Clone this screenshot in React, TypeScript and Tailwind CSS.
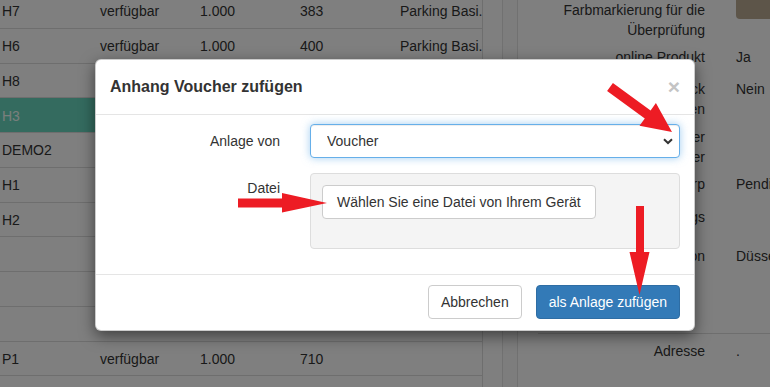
import React from 'react';

type Row = { id: string; status: string; qty: string; num: string; name: string; active?: boolean };

const rows: Row[] = [
  { id: 'H7', status: 'verfügbar', qty: '1.000', num: '383', name: 'Parking Basi.' },
  { id: 'H6', status: 'verfügbar', qty: '1.000', num: '400', name: 'Parking Basi.' },
  { id: 'H8', status: 'verfügbar', qty: '1.000', num: '412', name: 'Parking Basi.' },
  { id: 'H3', status: 'verfügbar', qty: '1.000', num: '377', name: 'Parking Basi.', active: true },
  { id: 'DEMO2', status: 'verfügbar', qty: '1.000', num: '12', name: 'Parking Basi.' },
  { id: 'H1', status: 'verfügbar', qty: '1.000', num: '350', name: 'Parking Basi.' },
  { id: 'H2', status: 'verfügbar', qty: '1.000', num: '351', name: 'Parking Basi.' },
  { id: '', status: '', qty: '', num: '', name: '' },
  { id: '', status: '', qty: '', num: '', name: '' },
  { id: '', status: '', qty: '', num: '', name: '' },
  { id: 'P1', status: 'verfügbar', qty: '1.000', num: '710', name: '' },
  { id: '', status: '', qty: '', num: '', name: '' },
];

function ProductTable() {
  return (
    <div className="w-[483px] shrink-0 border-r border-[#ddd] flex flex-col mt-[-6px]">
      {rows.map((r, i) => (
        <div
          key={i}
          className={`h-[34.75px] shrink-0 border-b border-[#ddd] flex items-center pt-[2px] whitespace-nowrap ${
            r.active ? 'bg-[#68d6be] text-[#f2fffb]' : ''
          }`}
        >
          <div className="w-[100px] pl-[2px]">{r.id}</div>
          <div className="w-[100px]">{r.status}</div>
          <div className="w-[100px]">{r.qty}</div>
          <div className="w-[100px]">{r.num}</div>
          <div className="flex-1 overflow-hidden">{r.name}</div>
        </div>
      ))}
    </div>
  );
}

function DetailRow({ label, value, className }: { label: React.ReactNode; value?: React.ReactNode; className?: string }) {
  return (
    <div className={`flex leading-[20px] ${className ?? ''}`}>
      <div className="w-[167px] shrink-0 text-right">{label}</div>
      <div className="ml-[31px] whitespace-nowrap">{value}</div>
    </div>
  );
}

function DetailPanel() {
  return (
    <div className="w-[300px] shrink-0 pl-[20px] flex flex-col">
      <DetailRow
        label={
          <>
            Farbmarkierung für die
            <br />
            Überprüfung
          </>
        }
        value={<div className="w-[40px] h-[29px] mt-[-10px] rounded-[4px] bg-[#baaa92]" />}
      />
      <DetailRow className="mt-[7px]" label="online Produkt" value="Ja" />
      <DetailRow
        className="mt-[12px]"
        label={
          <>
            Zahlung per Check
            <br />
            zulassen
          </>
        }
        value="Nein"
      />
      <DetailRow
        className="mt-[8px]"
        label={
          <>
            Kategorie der
            <br />
            Anbieter
          </>
        }
      />
      <DetailRow className="mt-[7px]" label="Status Corp" value="Pending" />
      <DetailRow className="mt-[13px]" label="Feiertags" />
      <DetailRow className="mt-[19px]" label="Standort Region" value="Düsseldorf" />
      <div className="mt-[67px] border-t border-[#ddd]" />
      <DetailRow className="mt-[7px]" label="Adresse" value="." />
    </div>
  );
}

function Arrows() {
  return (
    <svg className="absolute inset-0 pointer-events-none" width="770" height="387" viewBox="0 0 770 387">
      <polygon
        fill="#ed1c24"
        points="607.1,91 612.9,83 650.6,110.4 655.9,103.1 672,132 639.5,125.7 644.8,118.4"
      />
      <polygon fill="#ed1c24" points="238,198.5 282,198.5 282,193 327,203 282,212.5 282,207.5 238,207.5" />
      <polygon fill="#ed1c24" points="636,206 644,206 644,252 649.5,252 639.5,295 629.5,252 636,252" />
    </svg>
  );
}

function VoucherModal() {
  return (
    <div className="absolute left-[95px] top-[59px] w-[600px] rounded-[6px] bg-white border border-black/20 shadow-[0_5px_15px_rgba(0,0,0,0.5)]">
      <div className="h-[55px] px-[14px] border-b border-[#e5e5e5] flex items-center justify-between">
        <h4 className="text-[16px] font-bold text-[#333]">Anhang Voucher zufügen</h4>
        <button className="text-[21px] font-bold leading-none text-[#c4c4c4] mt-[-2px]">×</button>
      </div>

      <div className="px-[14px] pt-[9px] pb-[25px]">
        <div className="flex">
          <label className="w-[170px] shrink-0 text-right leading-[20px] pt-[7px]">Anlage von</label>
          <div className="ml-[30px] flex-1 relative">
            <select
              className="w-full h-[34px] appearance-none pl-[16px] rounded-[4px] border border-[#66afe9] bg-white text-[14px] text-[#333] outline-none shadow-[inset_0_1px_1px_rgba(0,0,0,0.075),0_0_8px_rgba(102,175,233,0.6)]"
              defaultValue="voucher"
            >
              <option value="voucher">Voucher</option>
            </select>
            <svg
              className="absolute right-[7px] top-[14px] pointer-events-none"
              width="10"
              height="7"
              viewBox="0 0 10 7"
              fill="none"
              stroke="#333"
              strokeWidth="2"
            >
              <path d="M1 1.2 L5 5 L9 1.2" />
            </svg>
          </div>
        </div>

        <div className="flex mt-[15px]">
          <label className="w-[170px] shrink-0 text-right leading-[20px] pt-[5px]">Datei</label>
          <div className="ml-[30px] flex-1 h-[76px] rounded-[4px] border border-[#ddd] bg-[#f4f4f4] pt-[11px] pl-[11px]">
            <button className="h-[34px] px-[14px] rounded-[4px] border border-[#ccc] bg-white text-[14px] text-[#333]">
              Wählen Sie eine Datei von Ihrem Gerät
            </button>
          </div>
        </div>
      </div>

      <div className="h-[56px] px-[14px] border-t border-[#e5e5e5] flex items-start justify-end gap-[14px] pt-[10px]">
        <button className="h-[34px] px-[12px] rounded-[4px] border border-[#ccc] bg-white text-[14px] text-[#333]">
          Abbrechen
        </button>
        <button className="h-[34px] px-[12px] rounded-[4px] border border-[#2e6da4] bg-[#337ab7] text-[14px] text-white">
          als Anlage zufügen
        </button>
      </div>
    </div>
  );
}

export default function App() {
  return (
    <div className="relative w-[770px] h-[387px] overflow-hidden bg-white text-[14px] text-[#333] font-['Liberation_Sans',Arial,sans-serif]">
      <div className="flex h-full">
        <ProductTable />
        <div className="w-[20px] shrink-0 border-r border-[#e3e3e3]" />
        <div className="w-[15px] shrink-0 border-r border-[#e3e3e3] bg-[#fafafa]" />
        <DetailPanel />
      </div>

      {/* backdrop */}
      <div className="absolute inset-0 bg-black/50" />

      <VoucherModal />
      <Arrows />
    </div>
  );
}
